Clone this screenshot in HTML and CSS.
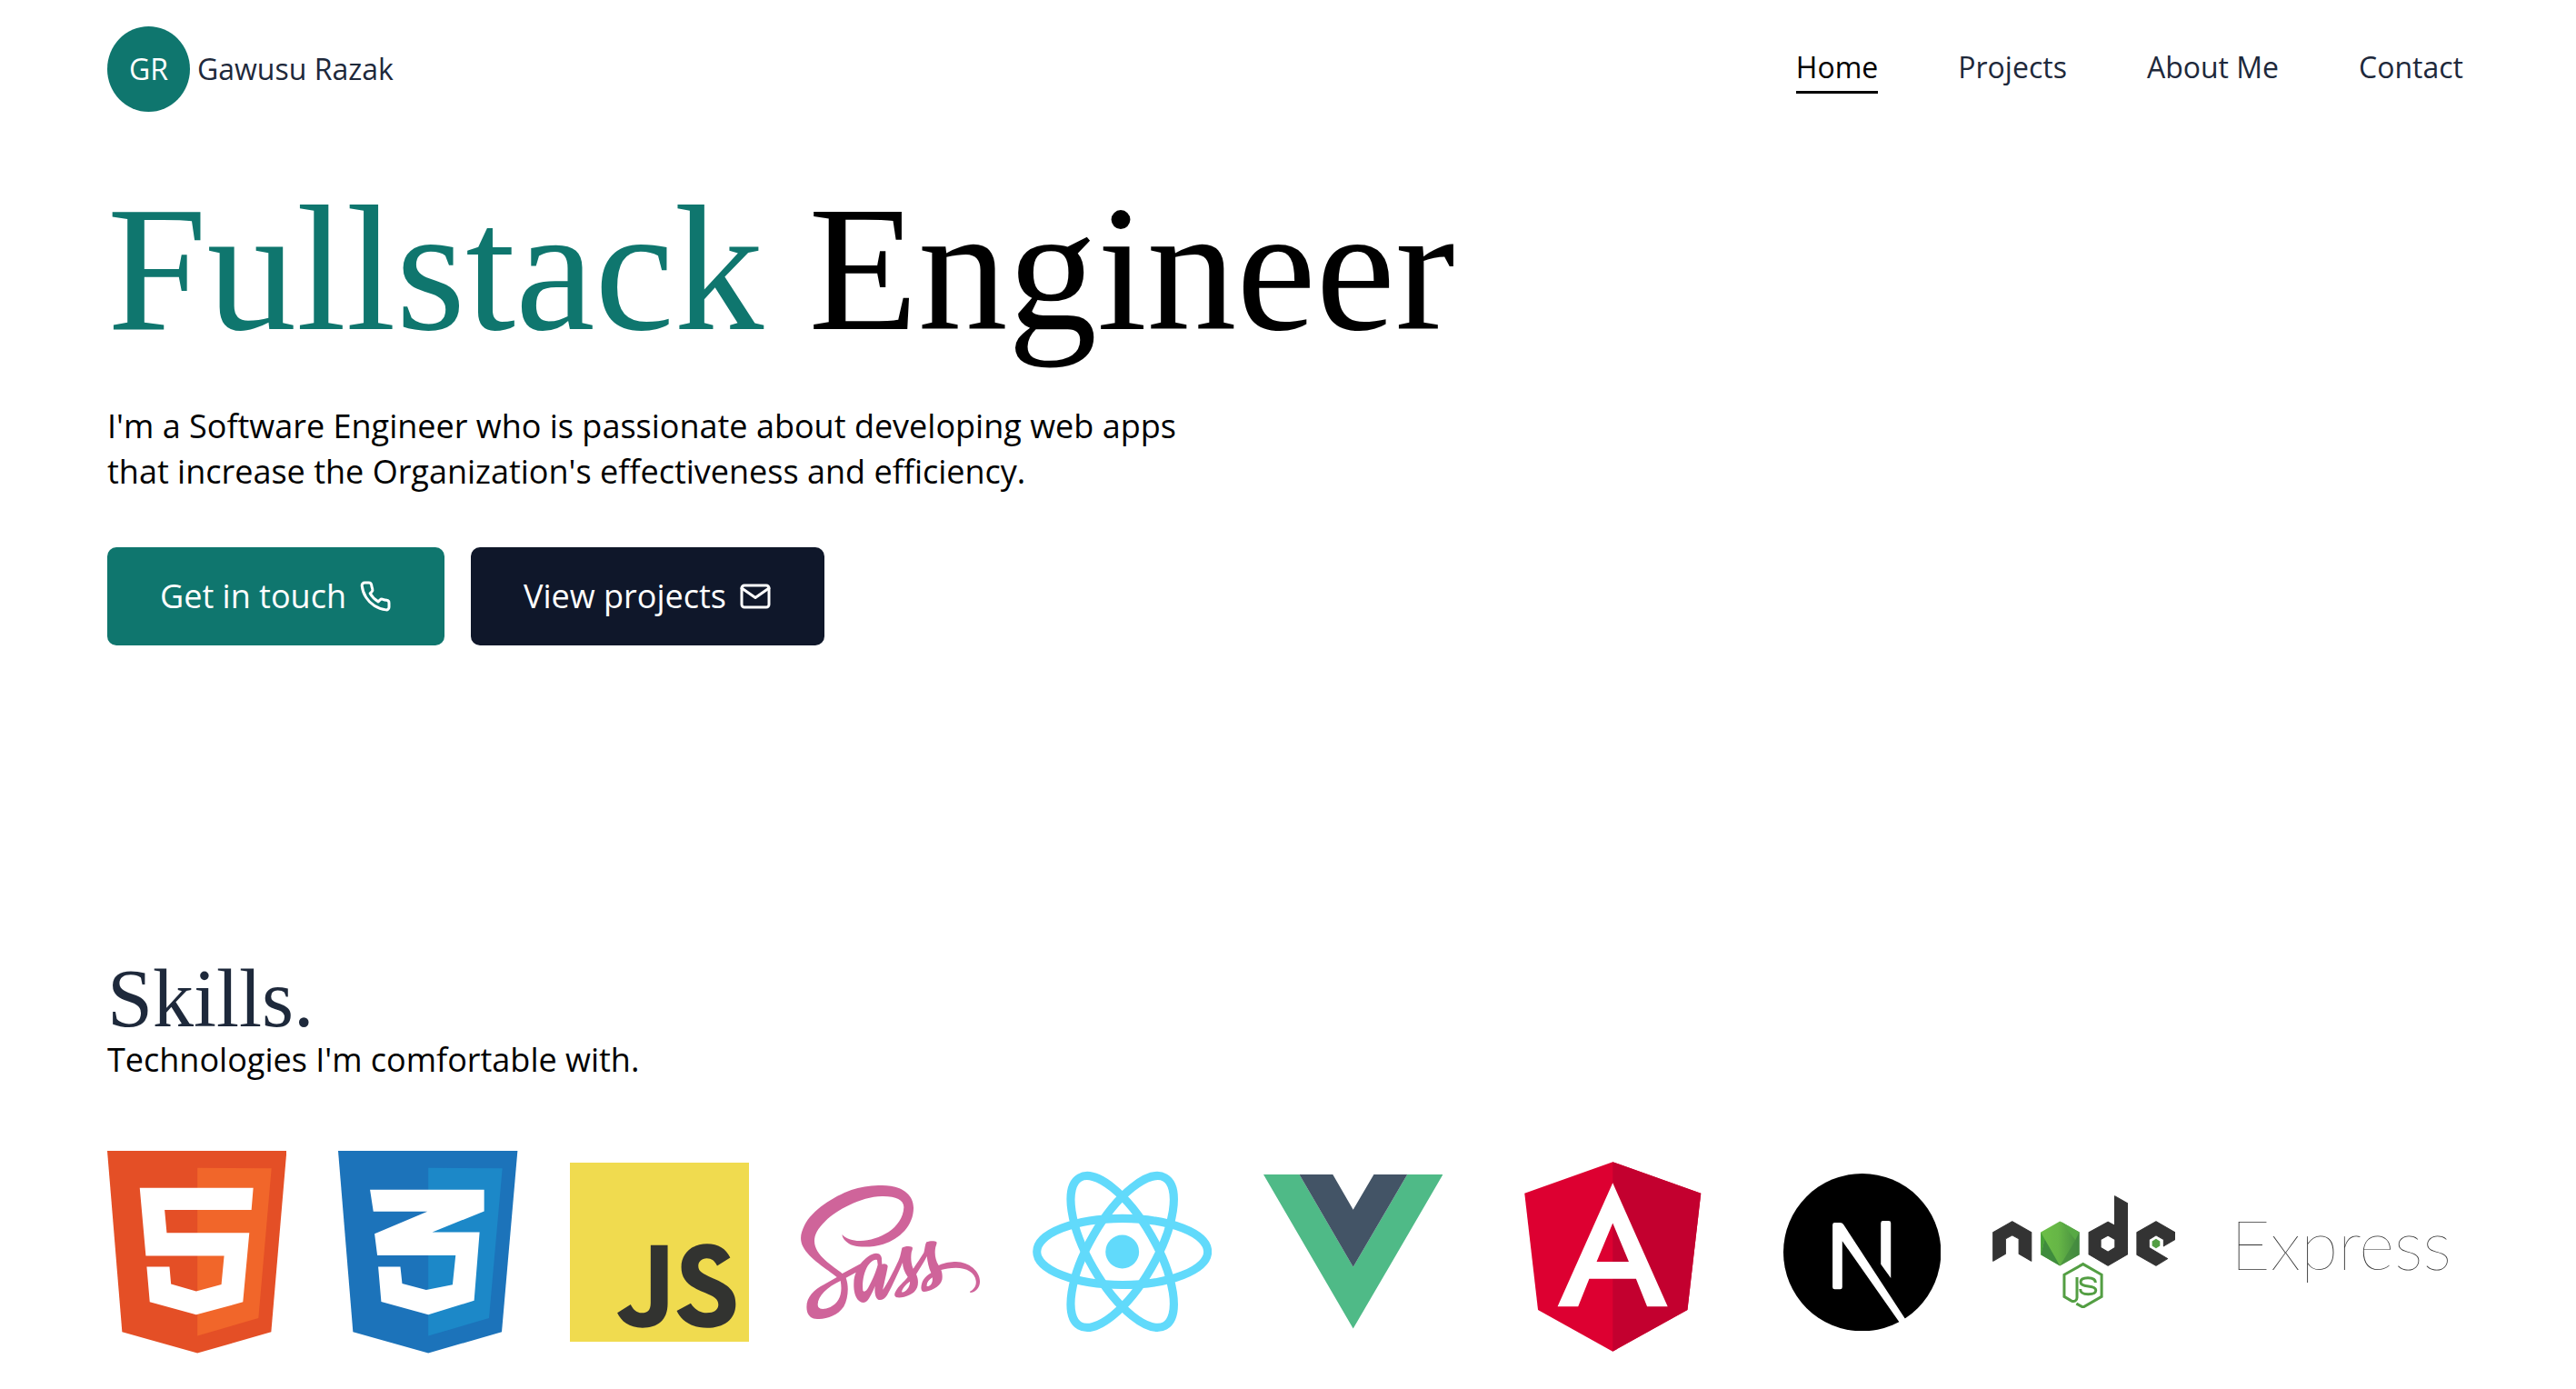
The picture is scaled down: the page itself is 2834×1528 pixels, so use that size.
FILE: index.html
```html
<!DOCTYPE html>
<html lang="en">
<head>
<meta charset="utf-8">
<meta name="viewport" content="width=device-width, initial-scale=1">
<title>Gawusu Razak</title>
<link rel="stylesheet" href="styles.css">
</head>
<body>
<header class="header">
  <a class="brand" href="#home">
    <span class="avatar">GR</span>
    <span>Gawusu Razak</span>
  </a>
  <nav class="nav">
    <a class="nav-link nav-link-active" href="#home">Home</a>
    <a class="nav-link" href="#projects">Projects</a>
    <a class="nav-link" href="#about">About Me</a>
    <a class="nav-link" href="#contact">Contact</a>
  </nav>
</header>
<main>
  <section class="hero" id="home">
    <h1 class="hero-title"><span class="accent">Fullstack</span> Engineer</h1>
    <p class="lead">I'm a Software Engineer who is passionate about developing web apps that increase the Organization's effectiveness and efficiency.</p>
    <div class="actions">
      <button class="button button-primary" type="button">Get in touch
        <svg class="button-icon" viewBox="0 0 24 24" aria-hidden="true"><path d="M22 16.92v3a2 2 0 0 1-2.18 2 19.79 19.79 0 0 1-8.63-3.07 19.5 19.5 0 0 1-6-6 19.79 19.79 0 0 1-3.07-8.67A2 2 0 0 1 4.11 2h3a2 2 0 0 1 2 1.72 12.84 12.84 0 0 0 .7 2.81 2 2 0 0 1-.45 2.11L8.09 9.91a16 16 0 0 0 6 6l1.27-1.27a2 2 0 0 1 2.11-.45 12.84 12.84 0 0 0 2.81.7A2 2 0 0 1 22 16.92z"/></svg>
      </button>
      <button class="button button-dark" type="button">View projects
        <svg class="button-icon" viewBox="0 0 24 24" aria-hidden="true"><rect x="2" y="4" width="20" height="16" rx="2"/><path d="M2 6l10 7 10-7"/></svg>
      </button>
    </div>
  </section>
  <section class="skills">
    <h2 class="skills-title">Skills.</h2>
    <p class="skills-text">Technologies I'm comfortable with.</p>
    <ul class="logos">
      <li class="logo">
        <svg viewBox="54 55 591 667" role="img" aria-label="HTML5">
          <path fill="#e44f26" d="M54 55H645L594 652 351 721 103 652z"/>
          <path fill="#f1662a" d="M351 111L595 113 552 606 351 664z"/>
          <path fill="#fff" d="M161 177H535L529 250H243L250 325H522L501 553 347 595 194 553 184 437H259L264 494 347 518 430 495 439 401H181z"/>
        </svg>
      </li>
      <li class="logo">
        <svg viewBox="816 55 591 667" role="img" aria-label="CSS3">
          <path fill="#1c73ba" d="M816 55H1407L1355 652 1113 721 865 652z"/>
          <path fill="#1c88c8" d="M1113 111L1357 113 1313 606 1113 664z"/>
          <path fill="#fff" d="M921 183H1297V254L1126 323H1282L1264 548 1113 595 958 552 948 437H1021L1027 492 1106 513 1193 496 1203 399H945L936 328 1110 255H932z"/>
        </svg>
      </li>
      <li class="logo">
        <svg viewBox="51 93 591 591" role="img" aria-label="JavaScript">
          <path fill="#f0db4f" d="M51 93H642V684H51z"/>
          <path fill="#323330" d="M207 588L251 560C258 575 270 588 288 588C306 588 317 580 317 555V365H373V557C373 612 340 637 290 637C245 637 220 615 207 588zM403 581L449 556C461 575 478 588 502 588C525 588 540 578 540 561C540 541 524 534 497 522L482 516C440 498 418 475 418 437C418 393 452 360 503 360C540 360 565 376 579 406L536 433C528 416 518 408 502 408C485 408 474 419 474 433C474 450 485 457 509 468L524 475C573 496 597 515 597 559C597 610 557 637 503 637C450 637 417 612 403 581z"/>
        </svg>
      </li>
      <li class="logo">
        <svg viewBox="813 168 592 441" role="img" aria-label="Sass">
          <path fill="#cf649a" fill-rule="evenodd" d="M950 330C960 345 990 352 1010 351C1070 350 1150 310 1153 240C1153 215 1125 203 1080 204C1010 206 930 250 895 285C868 312 858 330 858 352C858 400 920 435 950 459L1010 427C1025 408 1045 392 1062 392C1075 392 1081 402 1080 415L1081 428C1088 424 1100 428 1100 435C1098 450 1085 505 1084 512C1095 500 1125 440 1136 415C1143 398 1144 385 1147 374C1155 369 1170 368 1180 371C1184 376 1180 382 1178 390C1176 405 1176 425 1184 443C1195 427 1210 405 1219 390C1223 375 1223 362 1228 355C1238 351 1255 350 1261 355C1263 360 1259 367 1257 375C1254 395 1257 415 1268 432C1290 422 1310 420 1325 420C1370 421 1404 452 1404 485C1404 505 1390 521 1372 522L1371 518C1385 512 1393 498 1391 483C1388 455 1360 440 1325 440C1305 440 1288 443 1276 447C1280 457 1281 470 1279 480C1272 505 1235 520 1218 519C1208 517 1209 502 1213 490C1218 475 1230 465 1243 457C1235 440 1231 420 1229 402C1222 417 1208 440 1194 461C1200 475 1202 490 1197 505C1188 530 1150 541 1130 538C1120 534 1121 527 1127 516C1135 500 1152 488 1166 470C1155 455 1149 437 1149 423C1135 455 1115 500 1098 530C1090 543 1078 549 1068 545C1058 538 1056 520 1058 500C1050 520 1040 540 1032 549C1024 557 1013 556 1005 549C990 535 987 510 988 490C988 475 991 465 995 455L962 473C972 500 970 540 955 568C935 598 900 609 870 609C850 609 840 602 834 585C825 545 850 515 890 495L932 471C900 445 840 410 820 370C808 345 813 325 825 300C850 250 920 205 980 183C1020 169 1070 165 1110 170C1150 175 1185 200 1185 242C1185 300 1140 345 1085 362C1050 373 1010 373 985 366C965 359 948 342 950 330zM944 483C900 503 868 535 869 562C870 580 890 578 910 570C940 555 952 525 944 483zM1065 415C1058 410 1045 418 1035 432C1020 455 1015 490 1018 515C1022 522 1030 516 1036 505C1050 480 1062 450 1067 430zM1173 485C1160 495 1148 507 1146 520C1155 525 1175 505 1173 485zM1247 472C1235 480 1227 490 1229 501C1240 502 1250 490 1247 472z"/>
        </svg>
      </li>
      <li class="logo">
        <svg viewBox="78 124 588 530" role="img" aria-label="React">
          <circle cx="372" cy="389" r="55" fill="#61dafb"/>
          <g fill="none" stroke="#61dafb" stroke-width="27">
            <ellipse cx="372" cy="389" rx="280" ry="109"/>
            <ellipse cx="372" cy="389" rx="280" ry="109" transform="rotate(60 372 389)"/>
            <ellipse cx="372" cy="389" rx="280" ry="109" transform="rotate(120 372 389)"/>
          </g>
        </svg>
      </li>
      <li class="logo">
        <svg viewBox="840 135 590 507" role="img" aria-label="Vue">
          <path fill="#4fba87" d="M840 135H958L1135 439 1313 135H1430L1135 642z"/>
          <path fill="#435466" d="M958 135H1068L1135 251 1203 135H1313L1135 439z"/>
        </svg>
      </li>
      <li class="logo logo-angular">
        <svg viewBox="0 0 250 250" role="img" aria-label="Angular">
          <path fill="#dd0031" d="M125 30L31.900 63.200 46.100 186.300 125 230 203.900 186.300 218.100 63.200z"/>
          <path fill="#c3002f" d="M125 30V230L203.900 186.300 218.100 63.200z"/>
          <path fill="#fff" d="M125 52.100L66.800 182.600H88.500L100.200 153.400H149.600L161.300 182.600H183zM142 135.400H108L125 94.500z" fill-rule="evenodd"/>
        </svg>
      </li>
      <li class="logo logo-next">
        <svg viewBox="933 129 519 519" role="img" aria-label="Next.js">
          <circle cx="1192.500" cy="388.500" r="259.500"/>
          <path fill="#fff" d="M1095 298Q1095 291 1102 291H1120Q1127 291 1131 297L1336 610 1316 620 1127 351V503Q1127 510 1120 510H1102Q1095 510 1095 503zM1254 292Q1254 285 1261 285H1280Q1287 285 1287 292V473L1254 428z"/>
        </svg>
      </li>
      <li class="logo logo-node">
        <svg viewBox="36 36 602 372" role="img" aria-label="Node.js">
          <defs>
            <linearGradient id="leaf" x1="0" y1="0" x2="1" y2="0"><stop offset="0" stop-color="#6cbe47"/><stop offset=".45" stop-color="#66b646"/><stop offset="1" stop-color="#458c40"/></linearGradient>
          </defs>
          <g fill="#333" stroke="#333" stroke-width="3" stroke-linejoin="round">
            <path d="M38 252V158L101 122 164 158V252L123 228V179L101 167 79 179V228z"/>
            <path fill-rule="evenodd" d="M353 158L416 123 438 135V38L480 62V230L416 267 353 230zM416 168L392 181V208L416 222 439 208V181z"/>
            <path d="M511 158L574 122 637 158V181L599 203V181L574 167 551 181V208L612 244 574 267 511 231z"/>
          </g>
          <path fill="#539e43" d="M574 179L587 187V202L574 210 561 202V187z"/>
          <path fill="url(#leaf)" d="M258 121L322 157V231L258 268 195 231V157z"/>
          <path fill="#3f8b3d" d="M208 180L258 268 195 231z"/>
          <path fill="#46a038" d="M195 157L208 180 195 231z"/>
          <path fill="#57a944" d="M262 123L322 157 309 183z"/>
          <path fill="#41873f" d="M322 157V231L258 268 309 183z" opacity=".6"/>
          <g fill="none" stroke="#539e43" stroke-width="9">
            <path d="M312 392L334 404 395 369V297L334 262 272 297V369L296 383C305 387 314 382 314 372V305"/>
            <path d="M375 323C375 310 365 307 350 307C335 307 326 311 326 321C326 332 338 334 351 335C369 337 376 340 376 348C376 359 367 361 351 361C333 361 325 357 325 344"/>
          </g>
        </svg>
      </li>
      <li class="logo logo-express">
        <svg viewBox="0 0 265 104" role="img" aria-label="Express"><text class="express-word" x="4" y="72">Express</text></svg>
      </li>
    </ul>
  </section>
</main>
</body>
</html>
```
FILE: styles.css
```css
* {
  box-sizing: border-box;
}

body {
  margin: 0;
  padding: 0 118px;
  background: #fff;
  color: #000;
  font-family: "Open Sans", "Noto Sans", sans-serif;
  font-size: 36px;
  line-height: 50px;
}

h1,
h2,
p,
ul {
  margin: 0;
  padding: 0;
}

a {
  color: inherit;
  text-decoration: none;
}

.header {
  display: flex;
  align-items: center;
  justify-content: space-between;
  padding: 29px 0;
  color: #1e293b;
  font-size: 32px;
  line-height: 48px;
}

.brand {
  display: flex;
  align-items: center;
  gap: 8px;
}

.avatar {
  padding: 23px 24px;
  border-radius: 50%;
  background: #0f766e;
  color: #fff;
}

.nav {
  display: flex;
  gap: 88px;
  padding-right: 6px;
}

.nav-link {
  padding-bottom: 2px;
  border-bottom: 3px solid transparent;
}

.nav-link-active {
  border-color: #000;
  color: #000;
}

.hero {
  padding: 46px 0 347px;
}

.hero-title {
  margin-bottom: 50px;
  font-family: "Liberation Serif", serif;
  font-size: 197px;
  font-weight: 400;
  line-height: 196px;
}

.accent {
  color: #0f766e;
}

.lead {
  max-width: 1200px;
}

.actions {
  display: flex;
  gap: 29px;
  margin-top: 58px;
}

.button {
  display: flex;
  align-items: center;
  gap: 14px;
  padding: 29px 58px;
  border: 0;
  border-radius: 10px;
  color: #fff;
  font: inherit;
  font-weight: 500;
}

.button-primary {
  background: #0f766e;
}

.button-dark {
  background: #0f172a;
}

.button-icon {
  width: 36px;
  height: 36px;
  fill: none;
  stroke: currentColor;
  stroke-width: 2;
  stroke-linecap: round;
  stroke-linejoin: round;
}

.skills-title {
  color: #1e293b;
  font-family: "Liberation Serif", serif;
  font-size: 90px;
  font-weight: 400;
  line-height: 84px;
}

.logos {
  display: flex;
  align-items: center;
  gap: 57px;
  margin-top: 56px;
  list-style: none;
}

.logo {
  flex: 197 1 0;
}

.logo svg {
  display: block;
  width: 100%;
}

.logo-angular {
  flex-grow: 260;
}

.logo-next {
  flex-grow: 173;
}

.logo-node {
  flex-grow: 201;
}

.logo-express {
  flex-grow: 265;
}

.express-word {
  fill: #333;
  font-family: Lato, sans-serif;
  font-size: 75px;
  font-weight: 100;
}
```
